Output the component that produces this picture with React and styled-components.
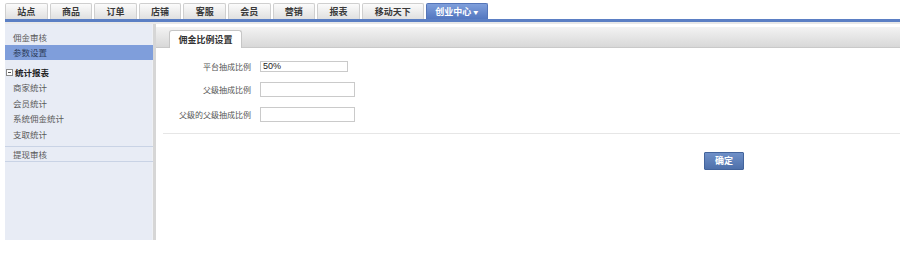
import React from 'react'
import styled, { createGlobalStyle } from 'styled-components'

const GlobalStyle = createGlobalStyle`
	body {
		margin: 0;
		background: #fff;
		font-family: 'Noto Sans CJK SC', 'Liberation Sans', sans-serif;
	}
`

const Page = styled.div`
	width: 900px;
	height: 256px;
	padding: 3px 0 0 5px;
	box-sizing: border-box;
	overflow: hidden;
`

const NavBar = styled.div`
	display: flex;
	align-items: flex-end;
	height: 16px;
`

const NavTab = styled.div`
	box-sizing: border-box;
	width: ${(p) => (p.$wide ? 62 : 42.6)}px;
	height: 16px;
	margin-right: 2px;
	display: flex;
	align-items: center;
	justify-content: center;
	font-size: 9px;
	font-weight: bold;
	color: ${(p) => (p.$active ? '#fff' : '#3a3a3a')};
	border: 1px solid ${(p) => (p.$active ? '#5475b8' : '#cfcfcf')};
	border-bottom: none;
	border-radius: 2px 2px 0 0;
	background: ${(p) =>
		p.$active
			? 'linear-gradient(#7f9fdb, #5377c0)'
			: 'linear-gradient(#fbfbfb, #e0e0e0)'};
`

const Caret = styled.span`
	font-size: 5px;
	margin-left: 2px;
`

const BlueLine = styled.div`
	height: 3px;
	background: #5b7fc4;
	border-bottom: 2px solid #e8e8e8;
`

const Body = styled.div`
	display: flex;
	height: 216px;
`

const Sidebar = styled.div`
	width: 148px;
	background: #e8ecf5;
	border-right: 3px solid #d6d6d6;
	box-shadow: inset -1px 0 0 #eef0f4;
	padding-top: 6px;
	box-sizing: content-box;
`

const NavItem = styled.div`
	height: ${(p) => p.$h || 15}px;
	line-height: ${(p) => p.$h || 15}px;
	padding-left: 8px;
	font-size: 8.5px;
	color: ${(p) => (p.$active ? '#2d3d5c' : '#5a5a5a')};
	background: ${(p) => (p.$active ? '#7f9edb' : 'transparent')};
	border-bottom: ${(p) => (p.$line ? '1px solid #c9d3e5' : 'none')};
`

const GroupHead = styled.div`
	display: flex;
	align-items: center;
	gap: 2px;
	height: 16px;
	margin-top: 4px;
	padding-left: 1px;
	font-size: 8.5px;
	font-weight: bold;
	color: #222;
`

const Toggle = styled.span`
	box-sizing: border-box;
	width: 7px;
	height: 7px;
	border: 1px solid #8a8a8a;
	background: #fff;
	position: relative;
	&::after {
		content: '';
		position: absolute;
		left: 1px;
		right: 1px;
		top: 2px;
		height: 1px;
		background: #555;
	}
`

const Divider = styled.div`
	margin-top: 4px;
	border-top: 1px solid #c9d3e5;
`

const Content = styled.div`
	flex: 1;
	padding-top: 3px;
`

const TabBar = styled.div`
	height: 21px;
	box-sizing: border-box;
	display: flex;
	align-items: flex-end;
	padding-left: 13px;
	background: linear-gradient(#f3f3f3, #d8d8d8);
	border-bottom: 1px solid #c9c9c9;
`

const PageTab = styled.div`
	box-sizing: border-box;
	width: 73px;
	height: 18px;
	margin-bottom: -1px;
	display: flex;
	align-items: center;
	justify-content: center;
	font-size: 9px;
	font-weight: bold;
	color: #333;
	background: #fff;
	border: 1px solid #c6c6c6;
	border-bottom: none;
	border-radius: 3px 3px 0 0;
`

const Form = styled.div`
	display: grid;
	grid-template-columns: 95px auto;
	column-gap: 9px;
	row-gap: 10px;
	align-items: center;
	padding-top: 13px;
`

const Label = styled.div`
	text-align: right;
	font-size: 8px;
	color: #555;
`

const Field = styled.div`
	box-sizing: border-box;
	width: ${(p) => (p.$small ? 88 : 95)}px;
	height: ${(p) => (p.$small ? 11 : 15)}px;
	border: 1px solid #cacaca;
	background: #fff;
	padding-left: 2px;
	font-family: 'Liberation Sans', sans-serif;
	font-size: 9px;
	line-height: 9px;
	color: #222;
`

const Separator = styled.div`
	margin: 11px 0 0 7px;
	border-top: 1px solid #e6e6e6;
`

const Actions = styled.div`
	padding: 11px 0 0 548px;
`

const Submit = styled.button`
	width: 40px;
	height: 18px;
	padding: 0;
	border: 1px solid #43649c;
	border-radius: 1px;
	background: linear-gradient(#6f90c8, #4e70aa);
	color: #fff;
	font-family: 'Noto Sans CJK SC', sans-serif;
	font-size: 9px;
	font-weight: bold;
`

const tabs = ['站点', '商品', '订单', '店铺', '客服', '会员', '营销', '报表']

export default function App() {
	return (
		<Page>
			<GlobalStyle />
			<NavBar>
				{tabs.map((t) => (
					<NavTab key={t}>{t}</NavTab>
				))}
				<NavTab $wide>移动天下</NavTab>
				<NavTab $wide $active>
					创业中心<Caret>▼</Caret>
				</NavTab>
			</NavBar>
			<BlueLine />
			<Body>
				<Sidebar>
					<NavItem>佣金审核</NavItem>
					<NavItem $active>参数设置</NavItem>
					<GroupHead>
						<Toggle />
						统计报表
					</GroupHead>
					<NavItem $h={15.6}>商家统计</NavItem>
					<NavItem $h={15.6}>会员统计</NavItem>
					<NavItem $h={15.6}>系统佣金统计</NavItem>
					<NavItem $h={15.6}>支取统计</NavItem>
					<Divider />
					<NavItem $h={14} $line>
						提现审核
					</NavItem>
				</Sidebar>
				<Content>
					<TabBar>
						<PageTab>佣金比例设置</PageTab>
					</TabBar>
					<Form>
						<Label>平台抽成比例</Label>
						<Field $small>50%</Field>
						<Label>父级抽成比例</Label>
						<Field />
						<Label>父级的父级抽成比例</Label>
						<Field />
					</Form>
					<Separator />
					<Actions>
						<Submit>确定</Submit>
					</Actions>
				</Content>
			</Body>
		</Page>
	)
}
